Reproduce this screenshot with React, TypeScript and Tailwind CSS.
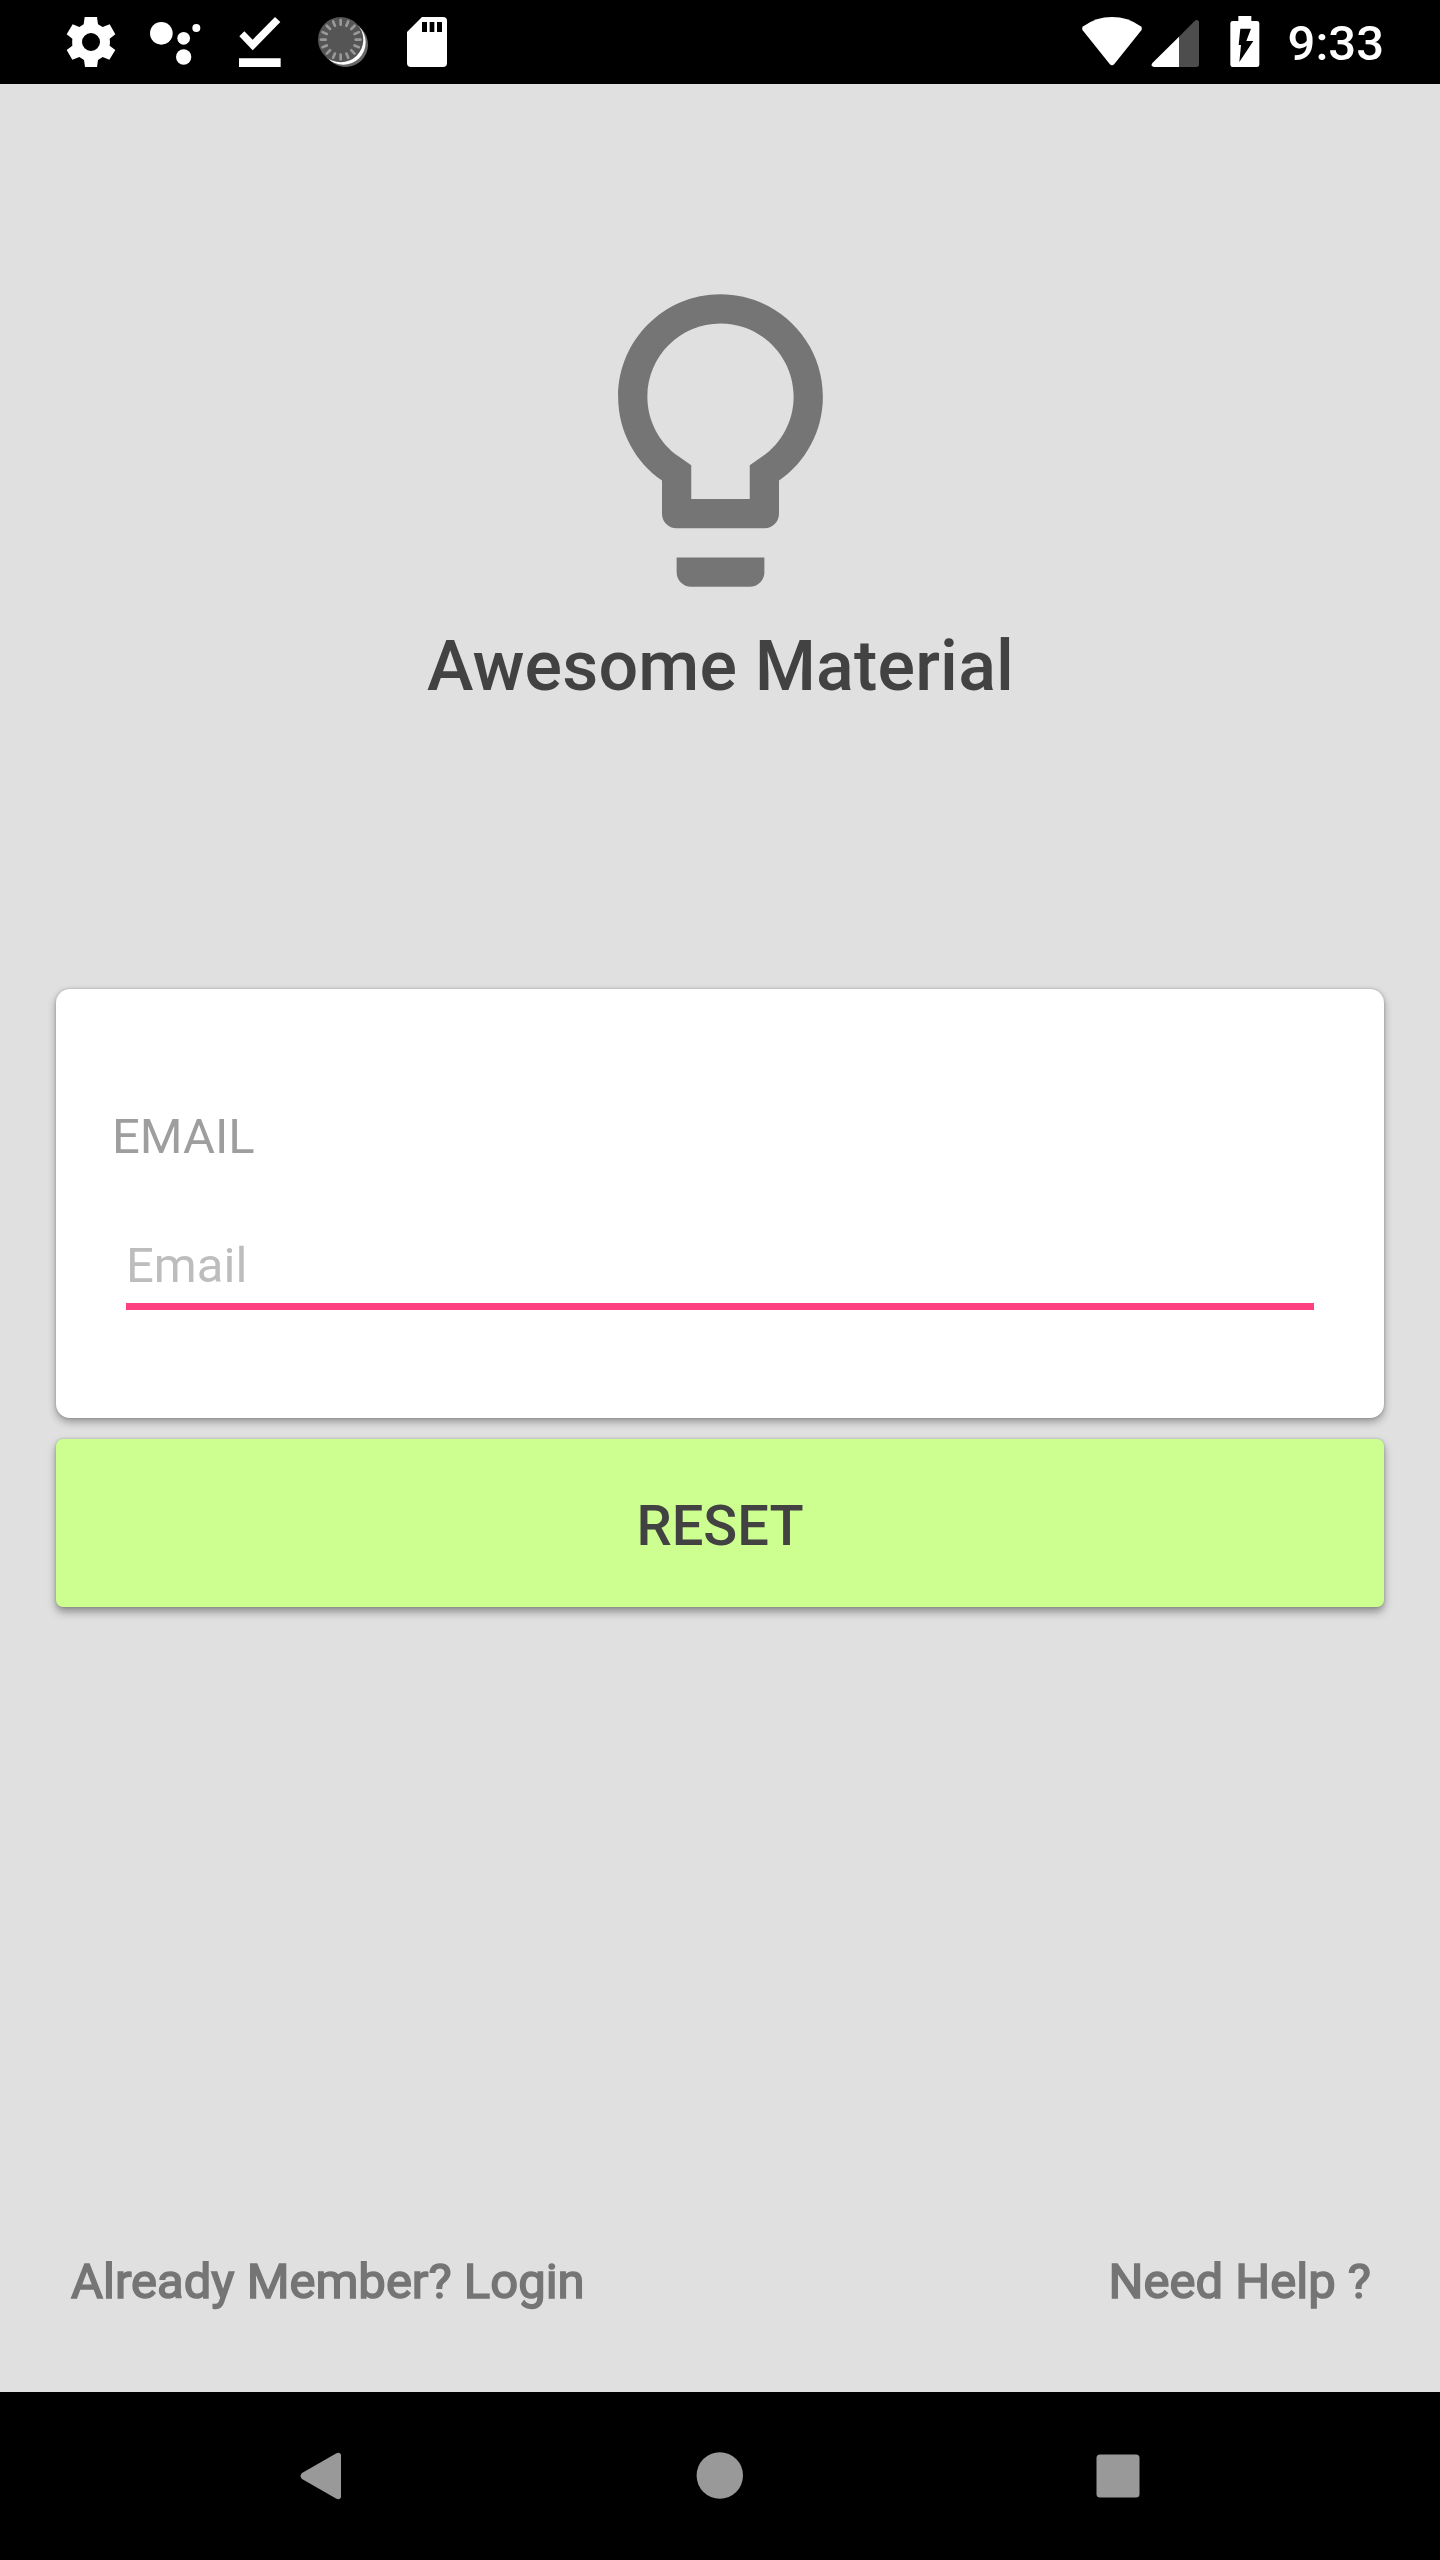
import React from "react";

function StatusBar() {
  return (
    <div className="flex h-[84px] shrink-0 items-center bg-black pl-[60px] pr-[56px] text-white">
      {/* settings */}
      <svg className="h-[84px] w-[60px]" viewBox="60 0 180 252" fill="#fff">
        <path fillRule="evenodd" d="M134 51H171L174 73L188 81L209 73L226 103L209 116Q211 126 209 137L226 150L208 179L188 171L174 180L171 201H135L132 180L118 171L97 179L80 150L97 137Q96 126 97 116L80 103L98 73L118 81L131 73ZM153 99A27 27 0 1 0 153 153A27 27 0 1 0 153 99Z" />
      </svg>
      {/* assistant dots */}
      <svg className="ml-[24px] h-[84px] w-[60px]" viewBox="312 0 180 252" fill="#fff">
        <circle cx="364" cy="100" r="34" />
        <circle cx="431" cy="115" r="19" />
        <circle cx="469" cy="84" r="12" />
        <circle cx="431" cy="171" r="23" />
      </svg>
      {/* download finished */}
      <svg className="ml-[24px] h-[84px] w-[60px]" viewBox="564 0 180 252" fill="#fff">
        <path d="M598 109L613 94L638 119L705 51L721 66L638 151ZM597 175H722V201H597Z" />
      </svg>
      {/* dial */}
      <svg className="ml-[24px] h-[84px] w-[60px]" viewBox="96 0 180 252">
        <circle cx="197" cy="134" r="67" fill="#666" />
        <circle cx="190" cy="127" r="67" fill="#fff" />
        <circle cx="182" cy="119" r="68" fill="#555" />
        <g stroke="#999" strokeWidth="8" strokeLinecap="round">
          {Array.from({ length: 16 }, (_, i) => (
            <line key={i} x1="182" y1="60" x2="182" y2="74" transform={`rotate(${i * 22.5} 182 119)`} />
          ))}
        </g>
      </svg>
      {/* sd card */}
      <svg className="ml-[24px] h-[84px] w-[60px]" viewBox="348 0 180 252">
        <path fill="#fff" d="M426 51H489Q501 51 501 63V189Q501 201 489 201H393Q381 201 381 189V96Z" />
        <path d="M426 66H441V96H426ZM449 66H463V96H449ZM471 66H486V96H471Z" />
      </svg>

      <div className="ml-auto flex items-center">
        {/* wifi */}
        <svg className="h-[84px] w-[60px]" viewBox="66 0 180 252" fill="#fff">
          <path d="M70 79Q108 51 156 51T242 79Q248 84 244 91L163 192Q156 200 149 192L68 91Q64 84 70 79Z" />
        </svg>
        {/* signal */}
        <svg className="ml-[9px] h-[84px] w-[49px]" viewBox="273 0 147 252">
          <path fill="#4d4d4d" d="M357 110L404 63Q408 59 412 60Q417 62 417 67V193Q417 201 409 201H357Z" />
          <path fill="#fff" d="M357 110V201H282Q277 201 275 196Q274 192 278 188Z" />
        </svg>
        {/* battery */}
        <svg className="ml-[30px] h-[84px] w-[30px]" viewBox="512 0 90 252">
          <path fill="#fff" d="M537 48H576V63H593Q600 63 600 70V194Q600 201 593 201H520Q513 201 513 194V70Q513 63 520 63H537Z" />
          <path d="M543 86H575L561 123H582L540 186L545 135H538Z" />
        </svg>
        <span className="ml-[28px] pt-[4px] text-[49px] font-medium leading-[84px]">9:33</span>
      </div>
    </div>
  );
}

function NavBar() {
  return (
    <div className="flex h-[168px] shrink-0 items-center justify-center gap-[308px] bg-black">
      <svg className="h-[90px] w-[90px]" viewBox="0 0 90 90" fill="#999">
        <path d="M25 42L59 22.600Q63 20.500 64 24V66Q63 69.500 59 67.400L25 48Q22 45 25 42Z" />
      </svg>
      <svg className="h-[90px] w-[90px]" viewBox="0 0 90 90" fill="#999">
        <circle cx="44.800" cy="44.500" r="23.200" />
      </svg>
      <svg className="h-[90px] w-[90px]" viewBox="0 0 90 90" fill="#999">
        <rect x="23.500" y="23.500" width="43" height="43" rx="3.500" />
      </svg>
    </div>
  );
}

export default function App() {
  return (
    <div className="flex h-[2560px] w-[1440px] flex-col overflow-hidden bg-[#e0e0e0] font-['Roboto',sans-serif]">
      <StatusBar />
      <main className="flex flex-1 flex-col px-[56px]">
        <header className="flex h-[905px] flex-col items-center pt-[181px]">
          <svg className="h-[351px] w-[351px]" viewBox="0 0 24 24" fill="#757575">
            <path d="M9 21c0 .55.45 1 1 1h4c.55 0 1-.45 1-1v-1H9v1zm3-19C8.14 2 5 5.14 5 9c0 2.38 1.19 4.47 3 5.74V17c0 .55.45 1 1 1h6c.55 0 1-.45 1-1v-2.26c1.81-1.27 3-3.36 3-5.74 0-3.86-3.14-7-7-7zm2.85 11.1l-.85.6V16h-4v-2.3l-.85-.6C7.8 12.16 7 10.63 7 9c0-2.76 2.24-5 5-5s5 2.24 5 5c0 1.63-.8 3.16-2.15 4.1z" />
          </svg>
          <h1 className="mt-[9px] pl-[1px] text-[70px] font-medium leading-[82px] tracking-[0.18px] text-[#424242]">Awesome Material</h1>
        </header>
        <section className="flex h-[429px] flex-col rounded-[14px] bg-white px-[56px] pt-[119px] shadow-[0_4px_8px_rgba(0,0,0,0.33),0_0_3px_rgba(0,0,0,0.22)]">
          <label className="text-[49px] leading-[58px] text-[#9e9e9e]">EMAIL</label>
          <div className="mx-[14px] mt-[71px] h-[73px] border-b-[7px] border-[#ff4081] text-[49px] leading-[58px] text-[#bdbdbd]">
            Email
          </div>
        </section>
        <button className="mt-[21px] h-[168px] rounded-[7px] bg-[#ccff90] pt-[5px] text-[56px] font-medium leading-[66px] text-[#424242] shadow-[0_5px_8px_rgba(0,0,0,0.36),0_0_3px_rgba(0,0,0,0.22)]">
          RESET
        </button>
        <footer className="mt-auto flex justify-between pb-[81px] pl-[15px] pr-[13px] text-[49px] leading-[58px] text-[#757575] [-webkit-text-stroke:1.6px_#757575]">
          <span>Already Member? Login</span>
          <span>Need Help ?</span>
        </footer>
      </main>
      <NavBar />
    </div>
  );
}
